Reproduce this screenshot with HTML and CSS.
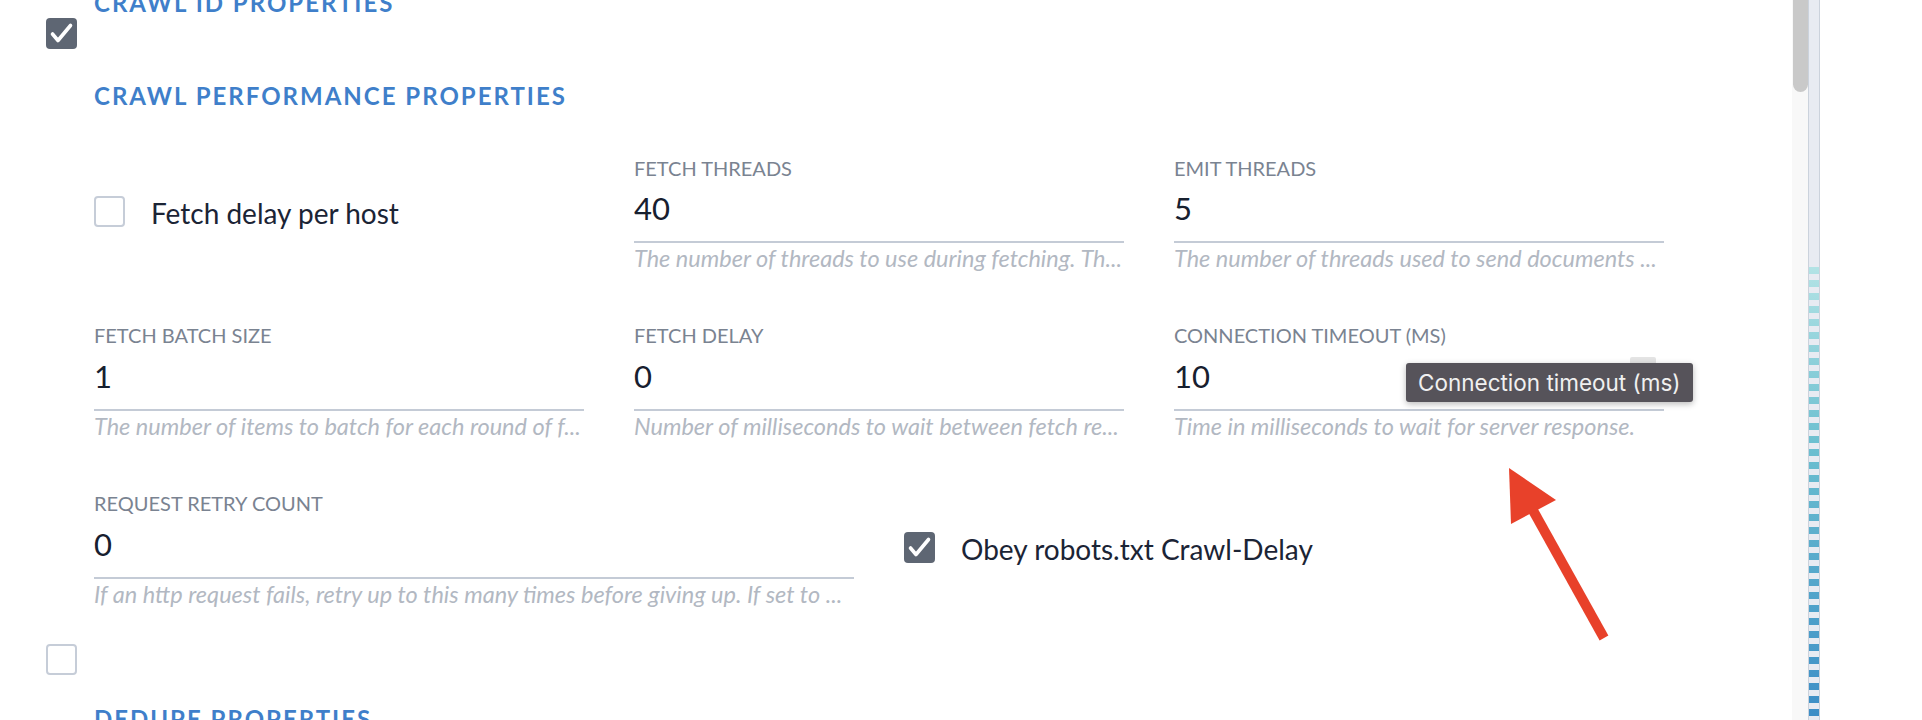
FILE: index.html
```html
<!DOCTYPE html>
<html>
<head>
<meta charset="utf-8">
<link rel="stylesheet" href="styles.css">
</head>
<body>
<div class="app">
  <div class="main">
    <div class="content">
      <h2 class="section-title first">CRAWL ID PROPERTIES</h2>
      <div class="box checked toggle">
        <svg viewBox="0 0 31 31" width="31" height="31"><polyline points="6.5,16 12,22.5 24.5,7.5" fill="none" stroke="#fff" stroke-width="3.6" stroke-linecap="round" stroke-linejoin="round"/></svg>
      </div>
      <h2 class="section-title perf">CRAWL PERFORMANCE PROPERTIES</h2>

      <div class="rows">
        <div class="grid3">
          <div class="check-field">
            <div class="box"></div>
            <span class="check-label">Fetch delay per host</span>
          </div>
          <div class="field">
            <div class="label">FETCH THREADS</div>
            <div class="value">40</div>
            <div class="help">The number of threads to use during fetching. Th...</div>
          </div>
          <div class="field">
            <div class="label">EMIT THREADS</div>
            <div class="value">5</div>
            <div class="help">The number of threads used to send documents ...</div>
          </div>
        </div>

        <div class="grid3">
          <div class="field">
            <div class="label">FETCH BATCH SIZE</div>
            <div class="value">1</div>
            <div class="help">The number of items to batch for each round of f...</div>
          </div>
          <div class="field">
            <div class="label">FETCH DELAY</div>
            <div class="value">0</div>
            <div class="help">Number of milliseconds to wait between fetch re...</div>
          </div>
          <div class="field tipped">
            <div class="label">CONNECTION TIMEOUT (MS)</div>
            <div class="value">10</div>
            <div class="help">Time in milliseconds to wait for server response.</div>
            <div class="spinner"></div>
            <div class="tooltip">Connection timeout (ms)</div>
          </div>
        </div>

        <div class="grid2">
          <div class="field">
            <div class="label">REQUEST RETRY COUNT</div>
            <div class="value">0</div>
            <div class="help">If an http request fails, retry up to this many times before giving up. If set to ...</div>
          </div>
          <div class="check-field">
            <div class="box checked">
              <svg viewBox="0 0 31 31" width="31" height="31"><polyline points="6.5,16 12,22.5 24.5,7.5" fill="none" stroke="#fff" stroke-width="3.6" stroke-linecap="round" stroke-linejoin="round"/></svg>
            </div>
            <span class="check-label">Obey robots.txt Crawl-Delay</span>
          </div>
        </div>
      </div>

      <div class="box toggle bottom-toggle"></div>
      <h2 class="section-title dedupe">DEDUPE PROPERTIES</h2>
    </div>
  </div>
  <div class="scroll-track"><div class="thumb"></div></div>
  <div class="rail"><div class="rail-stripes"></div></div>
  <div class="blank"></div>
</div>
<svg class="annotation" width="1922" height="720" viewBox="0 0 1922 720">
  <line x1="1604" y1="638" x2="1530" y2="505" stroke="#e8412a" stroke-width="10"/>
  <polygon points="1509,468 1556,500 1511,524" fill="#e8412a"/>
</svg>
</body>
</html>
```

FILE: styles.css
```css
html, body {
  margin: 0;
  padding: 0;
  background: #ffffff;
  overflow: hidden;
}

body {
  font-family: Lato, "Noto Sans", "Liberation Sans", sans-serif;
  width: 1922px;
  height: 720px;
  position: relative;
}

.app {
  display: flex;
  height: 720px;
}

.main {
  width: 1792px;
  height: 720px;
  overflow: hidden;
  flex: none;
}

.content {
  padding-left: 46px;
  display: flex;
  flex-direction: column;
  align-items: flex-start;
}

.section-title {
  margin: 0 0 0 48px;
  font-size: 24px;
  line-height: 29px;
  font-weight: 700;
  letter-spacing: 2px;
  color: #3f7fca;
}

.section-title.first {
  margin-top: -11.6px;
}

.section-title.perf {
  margin-top: 32px;
}

.section-title.dedupe {
  margin-top: 29.4px;
}

.box {
  width: 31px;
  height: 31px;
  box-sizing: border-box;
  border: 2px solid #c6cdd8;
  border-radius: 4px;
  background: #fff;
  flex: none;
}

.box.checked {
  border: none;
  background: #5e6673;
}

.box svg {
  display: block;
}

.toggle {
  margin-top: 0.6px;
}

.bottom-toggle {
  margin-top: 36.4px;
}

.rows {
  margin: 45.5px 0 0 48px;
  display: flex;
  flex-direction: column;
  gap: 52.3px;
}

.grid3 {
  display: grid;
  grid-template-columns: repeat(3, 490px);
  column-gap: 50px;
}

.grid2 {
  display: grid;
  grid-template-columns: repeat(2, 760px);
  column-gap: 50px;
}

.field {
  display: flex;
  flex-direction: column;
  min-width: 0;
  position: relative;
}

.label {
  font-size: 20px;
  line-height: 24px;
  color: #7a8391;
  white-space: nowrap;
}

.value {
  margin-top: 10.4px;
  font-size: 31px;
  line-height: 37px;
  color: #17202f;
  padding-bottom: 13.7px;
  border-bottom: 2px solid #c4cbd6;
}

.help {
  margin-top: 2.6px;
  font-size: 23.5px;
  line-height: 26px;
  font-style: italic;
  color: #b2b8c2;
  white-space: nowrap;
  overflow: hidden;
}

.check-field {
  padding-top: 38.6px;
  height: 34px;
  display: flex;
  align-items: center;
  gap: 26px;
}

.check-label {
  font-size: 28px;
  line-height: 34px;
  padding-top: 4px;
  color: #1b2435;
  white-space: nowrap;
}

.spinner {
  position: absolute;
  left: 456px;
  top: 33.5px;
  width: 26px;
  height: 32px;
  background: #e4e4e4;
  border-radius: 2px;
}

.tooltip {
  position: absolute;
  left: 232px;
  top: 39.5px;
  height: 39px;
  padding: 0 12px;
  display: flex;
  align-items: center;
  background: #56535a;
  color: #f0f0f0;
  font-family: Inter, "Liberation Sans", sans-serif;
  font-size: 22.5px;
  border-radius: 3px;
  box-shadow: 0 2px 6px rgba(0, 0, 0, 0.28);
  white-space: nowrap;
}

.scroll-track {
  width: 16px;
  flex: none;
  background: #f8f8f8;
  position: relative;
}

.thumb {
  width: 15px;
  height: 100px;
  margin-left: 1px;
  margin-top: -8px;
  background: #c9c9c9;
  border-radius: 8px;
}

.rail {
  width: 10px;
  flex: none;
  background: #e8ebf2;
  border-left: 1px solid #cbd2dc;
  border-right: 1px solid #cbd2dc;
  display: flex;
  flex-direction: column;
  justify-content: flex-end;
}

.rail-stripes {
  height: 459px;
  background:
    repeating-linear-gradient(to bottom, #e8ebf2 0 6px, transparent 6px 13px),
    linear-gradient(to bottom, #b5e4e6, #6cbfd0 40%, #3c8dc6);
}

.blank {
  flex: 1;
  background: #fff;
}

.annotation {
  position: absolute;
  left: 0;
  top: 0;
  pointer-events: none;
}
```
